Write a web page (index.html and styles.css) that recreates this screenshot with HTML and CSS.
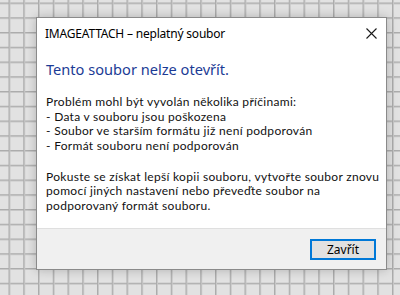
FILE: index.html
```html
<!DOCTYPE html>
<html lang="cs">
<head>
    <meta charset="UTF-8">
    <meta name="viewport" content="width=device-width, initial-scale=1.0">
    <title>IMAGEATTACH</title>
    <link rel="stylesheet" href="styles.css">
</head>
<body>
    <div class="dialog">
        <div class="titlebar">
            <span class="title">IMAGEATTACH – neplatný soubor</span>
            <button class="close" aria-label="Zavřít">
                <svg width="11" height="11" viewBox="0 0 11 11">
                    <path d="M0.5 0.5 L10.5 10.5 M10.5 0.5 L0.5 10.5" stroke="#1a1a1a" stroke-width="1.1" fill="none"/>
                </svg>
            </button>
        </div>

        <div class="content">
            <h1>Tento soubor nelze otevřít.</h1>
            <p>
                Problém mohl být vyvolán několika příčinami:<br>
                - Data v souboru jsou poškozena<br>
                - Soubor ve starším formátu již není podporován<br>
                - Formát souboru není podporován
            </p>
            <p class="hint">
                Pokuste se získat lepší kopii souboru, vytvořte soubor znovu<br>
                pomocí jiných nastavení nebo převeďte soubor na<br>
                podporovaný formát souboru.
            </p>
        </div>

        <div class="footer">
            <button class="btn">Zavřít</button>
        </div>
    </div>
</body>
</html>
```

FILE: styles.css
```css
html, body {
    margin: 0;
    height: 100%;
}
body {
    font-family: "Noto Sans", "Liberation Sans", sans-serif;
    font-size: 12px;
    color: #000;
    background-color: #e2e2e2;
    background-image:
        linear-gradient(90deg, #acacac 1px, #c6c6c6 1px, #c6c6c6 2px, transparent 2px),
        linear-gradient(180deg, #acacac 1px, #c6c6c6 1px, #c6c6c6 2px, transparent 2px);
    background-size: 14.75px 14.75px;
    background-position: 8.5px 2.5px;
    padding: 17px 0 0 36px;
    box-sizing: border-box;
    overflow: hidden;
}
.dialog {
    width: 351px;
    height: 253px;
    box-sizing: border-box;
    background: #fff;
    border: 1px solid #8a8a8a;
    box-shadow: 0 0 10px rgba(0,0,0,0.22);
    display: flex;
    flex-direction: column;
}
.titlebar {
    height: 31px;
    display: flex;
    align-items: center;
    justify-content: space-between;
    padding: 0 9px 0 8px;
}
.title {
    font-size: 12px;
    letter-spacing: -0.2px;
}
.close {
    background: none;
    border: none;
    padding: 0;
    width: 12px;
    height: 12px;
    display: flex;
    align-items: center;
    justify-content: center;
}
.content {
    flex: 1;
    padding: 10px 9px 0 9px;
}
h1 {
    margin: 0 0 16px;
    font-size: 14.6px;
    font-weight: normal;
    color: #1b3b95;
    line-height: 20px;
}
p {
    margin: 0;
    font-family: Lato, "Liberation Sans", sans-serif;
    line-height: 14.5px;
    font-size: 12px;
    letter-spacing: 0.3px;
    color: #111;
    white-space: nowrap;
}
.hint {
    margin-top: 16.5px;
}
.footer {
    height: 40px;
    background: #f0f0f0;
    border-top: 1px solid #dfdfdf;
    display: flex;
    align-items: center;
    justify-content: flex-end;
    padding-right: 10px;
}
.btn {
    font-family: "Noto Sans", "Liberation Sans", sans-serif;
    font-size: 12px;
    width: 66px;
    height: 21px;
    padding: 0;
    background: #e1e1e1;
    border: 2px solid #0078d7;
    color: #000;
}
```
